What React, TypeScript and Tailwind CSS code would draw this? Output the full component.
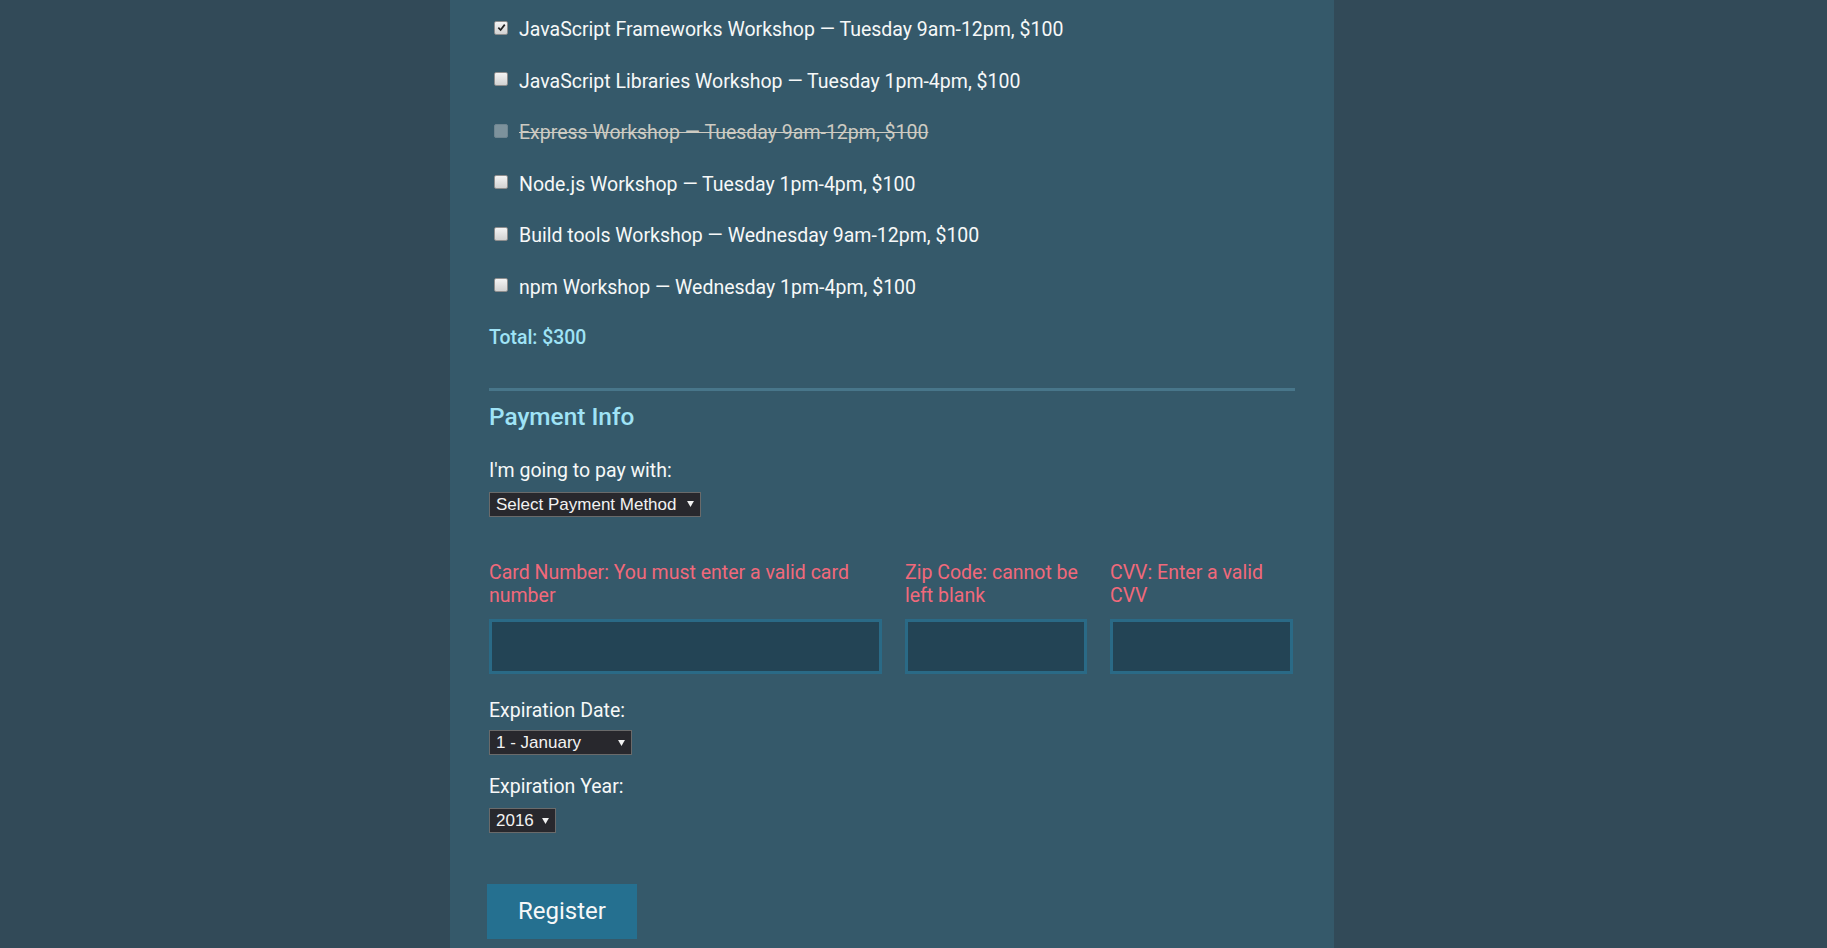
const workshops = [
  { label: 'JavaScript Frameworks Workshop — Tuesday 9am-12pm, $100', checked: true },
  { label: 'JavaScript Libraries Workshop — Tuesday 1pm-4pm, $100' },
  { label: 'Express Workshop — Tuesday 9am-12pm, $100', disabled: true },
  { label: 'Node.js Workshop — Tuesday 1pm-4pm, $100' },
  { label: 'Build tools Workshop — Wednesday 9am-12pm, $100' },
  { label: 'npm Workshop — Wednesday 1pm-4pm, $100' },
]

function Checkbox({ checked, disabled }: { checked?: boolean; disabled?: boolean }) {
  return (
    <span
      className={
        'flex items-center justify-center w-[14px] h-[14px] rounded-[2px] border shrink-0 ' +
        (disabled
          ? 'bg-[#7d929c] border-[#6f8590]'
          : 'bg-gradient-to-b from-[#f4f4f4] to-[#d2d2d2] border-[#8e8e8e]')
      }
    >
      {checked && (
        <svg viewBox="0 0 10 10" className="w-[9px] h-[9px]" aria-hidden="true">
          <path d="M1.5 5.2 L4 7.8 L8.6 1.8" fill="none" stroke="#222" strokeWidth="1.9" />
        </svg>
      )}
    </span>
  )
}

function FakeSelect({ text, width }: { text: string; width: string }) {
  return (
    <div
      className={`flex items-center justify-between h-[25px] pl-[6px] pr-[6px] bg-[#28282d] border border-[#6a6a6a] text-[#f2f2f2] text-[17px] font-['Liberation_Sans',Arial,sans-serif] ${width}`}
    >
      <span className="leading-none">{text}</span>
      <svg viewBox="0 0 8 7" className="w-[7px] h-[6px] ml-[5px]" aria-hidden="true">
        <polygon points="0,0 8,0 4,7" fill="#f2f2f2" />
      </svg>
    </div>
  )
}

export default function App() {
  return (
    <div className="min-h-screen bg-[#324a58] font-['Roboto','Liberation_Sans',sans-serif]">
      <div className="ml-[450px] w-[884px] min-h-screen bg-[#35596a] px-[39px] pt-[16px] pb-[20px]">
        {/* Activities */}
        <div className="flex flex-col gap-[23.5px]">
          {workshops.map((w) => (
            <label key={w.label} className="flex items-center h-[28px] pl-[5px] gap-[11px]">
              <span className="-mt-[5px]">
                <Checkbox checked={w.checked} disabled={w.disabled} />
              </span>
              <span
                className={
                  'text-[19.5px] leading-[28px] ' +
                  (w.disabled ? 'text-[#cdcbc2] line-through' : 'text-[#f6f8f8]')
                }
              >
                {w.label}
              </span>
            </label>
          ))}
        </div>
        <p className="mt-[22.5px] text-[19.4px] leading-[28px] font-medium text-[#9fe3f6]">Total: $300</p>

        <hr className="mt-[36px] border-0 h-[3px] bg-[#48768a]" />

        {/* Payment */}
        <h2 className="mt-[9.5px] text-[24.4px] leading-[32px] font-medium text-[#9fe3f6]">Payment Info</h2>
        <p className="mt-[24px] text-[19.5px] leading-[28px] text-[#f6f8f8]">I'm going to pay with:</p>
        <div className="mt-[7px]">
          <FakeSelect text="Select Payment Method" width="w-[212px]" />
        </div>

        <div className="mt-[44px] grid grid-cols-[393px_182px_183px] gap-x-[23px]">
          {[
            'Card Number: You must enter a valid card number',
            'Zip Code: cannot be left blank',
            'CVV: Enter a valid CVV',
          ].map((t) => (
            <div key={t} className="flex flex-col">
              <p className="h-[47px] text-[19.5px] leading-[23.3px] text-[#f1697b]">{t}</p>
              <div className="mt-[11px] h-[55px] bg-[#234455] border-[3px] border-[#2a6a86]" />
            </div>
          ))}
        </div>

        <p className="mt-[23px] text-[19.5px] leading-[28px] text-[#f6f8f8]">Expiration Date:</p>
        <div className="mt-[5.5px]">
          <FakeSelect text="1 - January" width="w-[143px]" />
        </div>
        <p className="mt-[17.5px] text-[19.5px] leading-[28px] text-[#f6f8f8]">Expiration Year:</p>
        <div className="mt-[7.5px]">
          <FakeSelect text="2016" width="w-[67px]" />
        </div>

        <button className="mt-[50.5px] -ml-[2px] w-[150px] h-[55px] bg-[#257090] text-[24px] text-[#f6f8f8]">
          Register
        </button>
      </div>
    </div>
  )
}
